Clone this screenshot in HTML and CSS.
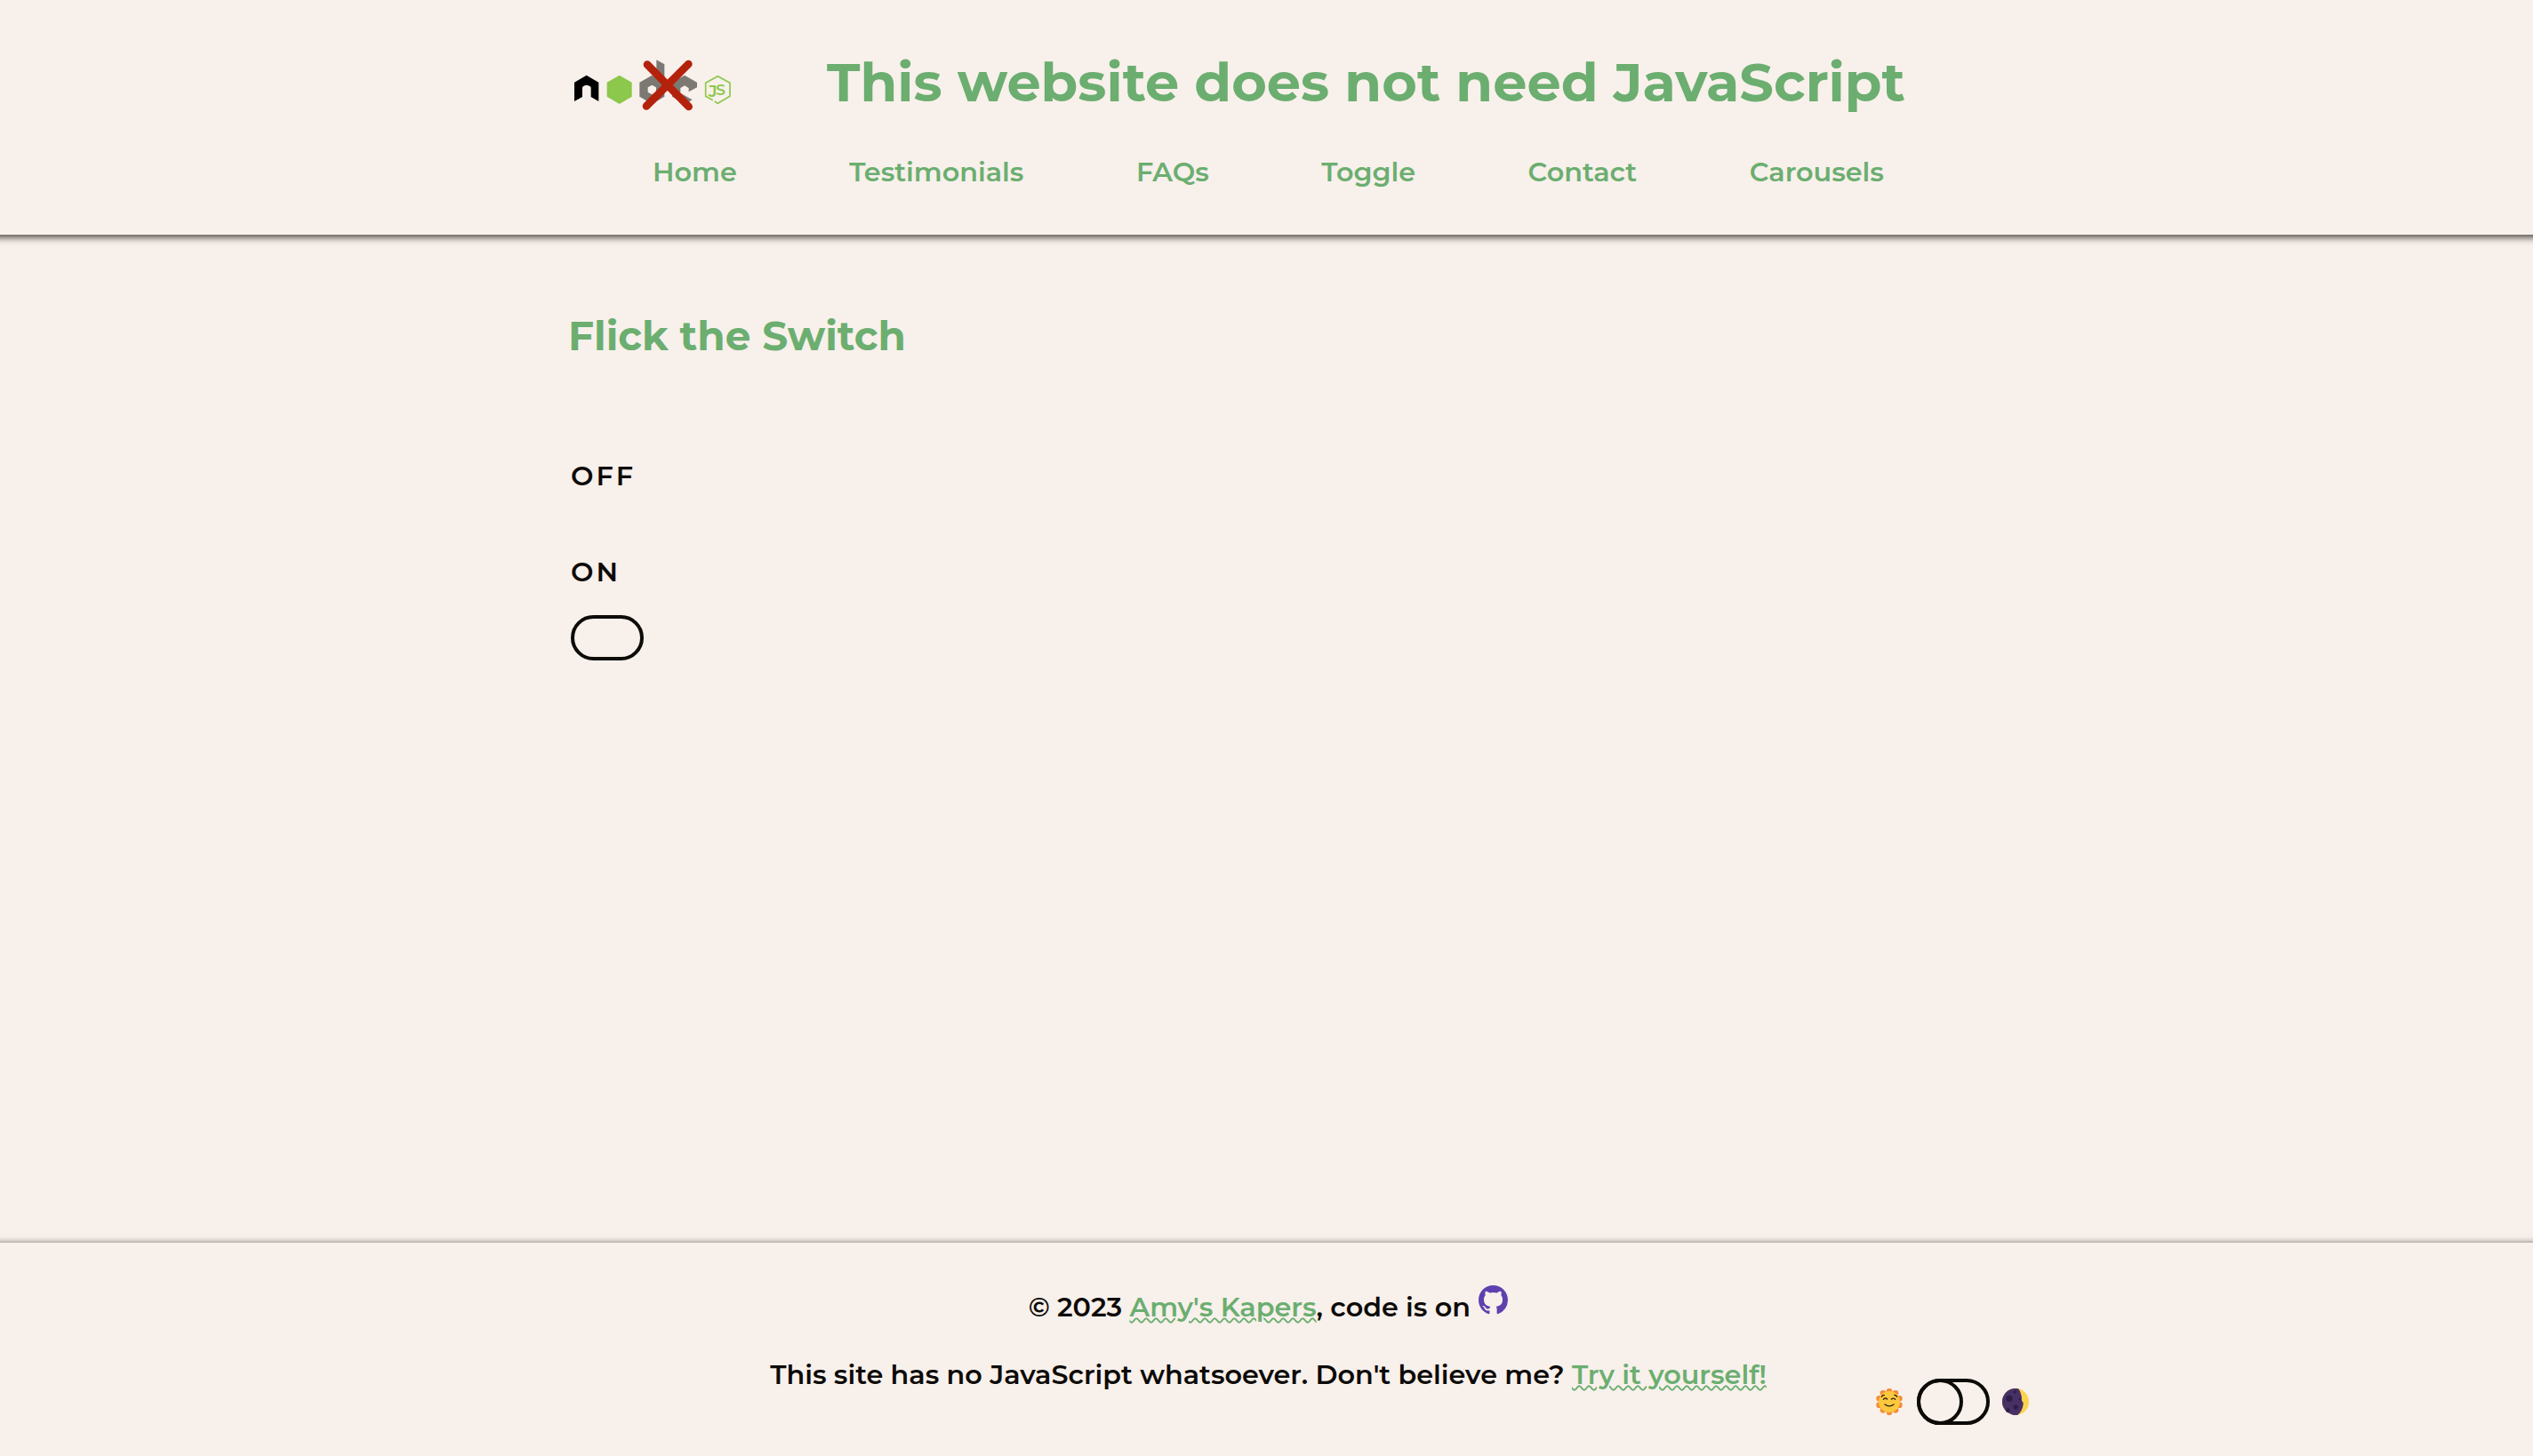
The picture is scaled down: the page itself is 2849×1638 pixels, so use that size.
FILE: index.html
```
<!DOCTYPE html>
<html lang="en">
<head>
    <meta charset="UTF-8">
    <meta name="viewport" content="width=device-width, initial-scale=1.0">
    <title>Toggle | This website does not need JavaScript</title>
    <link rel="stylesheet" href="styles.css">
</head>
<body>
    <header class="header">
        <div class="container">
            <div class="brand">
                <svg class="logo" viewBox="42 48 540 180" aria-hidden="true">
                    <path d="M89 104l41 24v64l-26-15v-31q0-6-15-9q-14 3-14 9v31l-27 15v-64z" fill="#000"/>
                    <path d="M200 104l42 24v48l-42 25l-42-25v-48z" fill="#8cc84b"/>
                    <g fill="#7b7972">
                        <path fill-rule="evenodd" d="M325 52l27 15v109l-42 25l-42-25v-48l42-24l15 9zM310 137l-14 8v16l14 8l14-8v-16z"/>
                        <path d="M420 104l42 24v17l-28 15v-13l-14-8l-14 8v17l40 23l-24 14l-44-25v-48z"/>
                    </g>
                    <path d="M515 188l-24-13v-45l41-23l41 23v45l-41 24l-11-7" fill="none" stroke="#8cc84b" stroke-width="5"/>
                    <text class="logo-js logo-j" x="500" y="178">J</text>
                    <text class="logo-js" x="525" y="172">S</text>
                    <path d="M294 68l140 142M433 66L291 208" stroke="#b4220c" stroke-width="26" stroke-linecap="round"/>
                </svg>
                <h1>This website does not need JavaScript</h1>
            </div>
            <nav class="nav">
                <a href="#">Home</a>
                <a href="#">Testimonials</a>
                <a href="#">FAQs</a>
                <a href="#">Toggle</a>
                <a href="#">Contact</a>
                <a href="#">Carousels</a>
            </nav>
        </div>
    </header>

    <main class="container main">
        <h2>Flick the Switch</h2>
        <div class="switch-box">
            <span class="off">OFF</span>
            <span class="on">ON</span>
            <div class="switch"></div>
        </div>
    </main>

    <footer class="footer">
        <p>© 2023 <a href="#">Amy's Kapers</a>, code is on
            <svg class="github" viewBox="0 0 16 16"><path d="M8 0C3.58 0 0 3.58 0 8c0 3.54 2.29 6.53 5.47 7.59.4.07.55-.17.55-.38 0-.19-.01-.82-.01-1.49-2.01.37-2.53-.49-2.69-.94-.09-.23-.48-.94-.82-1.13-.28-.15-.68-.52-.01-.53.63-.01 1.08.58 1.23.82.72 1.21 1.87.87 2.33.66.07-.52.28-.87.51-1.07-1.78-.2-3.64-.89-3.64-3.95 0-.87.31-1.59.82-2.15-.08-.2-.36-1.02.08-2.12 0 0 .67-.21 2.2.82.64-.18 1.32-.27 2-.27s1.36.09 2 .27c1.53-1.04 2.2-.82 2.2-.82.44 1.1.16 1.92.08 2.12.51.56.82 1.27.82 2.15 0 3.07-1.87 3.75-3.65 3.95.29.25.54.73.54 1.48 0 1.07-.01 1.93-.01 2.2 0 .21.15.46.55.38A8.01 8.01 0 0 0 16 8c0-4.42-3.58-8-8-8z"/></svg>
        </p>
        <p>This site has no JavaScript whatsoever. Don't believe me? <a href="#">Try it yourself!</a></p>
    </footer>

    <div class="theme">
        <svg class="sun" viewBox="0 0 90 90">
            <g fill="#f48c37">
                <circle cx="45" cy="10" r="10"/><circle cx="66" cy="16" r="10"/><circle cx="79" cy="34" r="10"/>
                <circle cx="79" cy="56" r="10"/><circle cx="66" cy="73" r="10"/><circle cx="45" cy="80" r="10"/>
                <circle cx="24" cy="73" r="10"/><circle cx="11" cy="56" r="10"/><circle cx="11" cy="34" r="10"/>
                <circle cx="24" cy="16" r="10"/>
            </g>
            <circle cx="45" cy="45" r="36" fill="#fcc83e"/>
            <path d="M19 28q3-6 9-6M71 28q-3-6-9-6M25 37q6-7 13-1M52 36q8-6 13 1M30 54q15 11 30 0" fill="none" stroke="#2b2018" stroke-width="4" stroke-linecap="round"/>
        </svg>
        <div class="switch theme-switch"></div>
        <svg class="moon" viewBox="0 0 90 90">
            <circle cx="45" cy="45" r="45" fill="#fbd34e"/>
            <path d="M55 1A45 45 0 1 0 53 89C63 81 71 66 71 48Q63 44 66 29Q63 12 55 1z" fill="#473064"/>
            <g fill="#2f1d49">
                <circle cx="24" cy="34" r="11"/><circle cx="46" cy="63" r="8"/>
                <circle cx="43" cy="12" r="5"/><circle cx="19" cy="74" r="7"/><circle cx="60" cy="36" r="4"/>
            </g>
        </svg>
    </div>
</body>
</html>
```
FILE: styles.css
```
body {
    margin: 0;
    display: flex;
    flex-direction: column;
    min-height: 100vh;
    overflow-x: hidden;
    background: #f8f0eb;
    color: #0d0b08;
    font-family: Montserrat, Inter, sans-serif;
    font-size: 30.25px;
    font-weight: 600;
}

a {
    color: #6bae70;
}

h1, h2 {
    margin: 0;
    color: #6bae70;
    font-weight: 700;
    line-height: 1;
}

.container {
    width: 1569px;
    margin: 0 auto;
}

/* a bit wider than the page so the shadow runs edge to edge */
.header {
    height: 264px;
    margin: 0 -12px;
    box-shadow: 0 3px 8px rgba(13, 11, 8, 0.75);
}

.brand {
    display: flex;
    padding-top: 62px;
}

.brand h1 {
    margin-left: 106px;
    font-size: 2em;
    white-space: nowrap;
}

.logo {
    width: 180px;
    height: 60px;
    margin: 4px 0 -4px 4px;
    flex-shrink: 0;
}

.logo-js {
    fill: #8cc84b;
    font-size: 52px;
    font-weight: 600;
}

.logo-j {
    font-size: 56px;
}

.nav {
    display: flex;
    gap: 126.6px;
    padding: 56px 0 0 94px;
    line-height: 30px;
}

.nav a {
    text-decoration: none;
}

.main {
    padding-top: 91px;
}

.main h2 {
    margin-left: -1px;
    font-size: 1.5em;
}

.switch-box {
    display: flex;
    flex-direction: column;
    align-items: flex-start;
    padding: 121px 0 0 2px;
    line-height: 30px;
    letter-spacing: 3px;
}

.off {
    margin-bottom: 78px;
}

.on {
    margin-bottom: 33px;
}

.switch {
    box-sizing: border-box;
    width: 82px;
    height: 51px;
    border: 4px solid #0d0b08;
    border-radius: 26px;
}

.footer {
    box-sizing: border-box;
    height: 240px;
    margin: auto -12px 0;
    padding: 50px 0 0 4px;
    text-align: center;
    line-height: 45px;
    box-shadow: 0 2px 8px rgba(13, 11, 8, 0.95);
}

.footer p {
    margin: 0 0 31px;
}

.footer a {
    text-decoration: underline wavy 2px;
}

.github {
    width: 33px;
    height: 33px;
    margin: -10px 0 0 1px;
    vertical-align: 2px;
    fill: #5e41ae;
}

/* light / dark switch, floats over the footer */
.theme {
    position: fixed;
    right: 567px;
    bottom: 35px;
    display: flex;
    align-items: center;
}

.sun, .moon {
    width: 30px;
    height: 30px;
}

.theme-switch {
    height: 52px;
    margin: 0 14px 0 16px;
}

.theme-switch::before {
    content: "";
    display: block;
    box-sizing: border-box;
    width: 52px;
    height: 52px;
    margin: -4px;
    border: 4px solid #0d0b08;
    border-radius: 50%;
}
```
